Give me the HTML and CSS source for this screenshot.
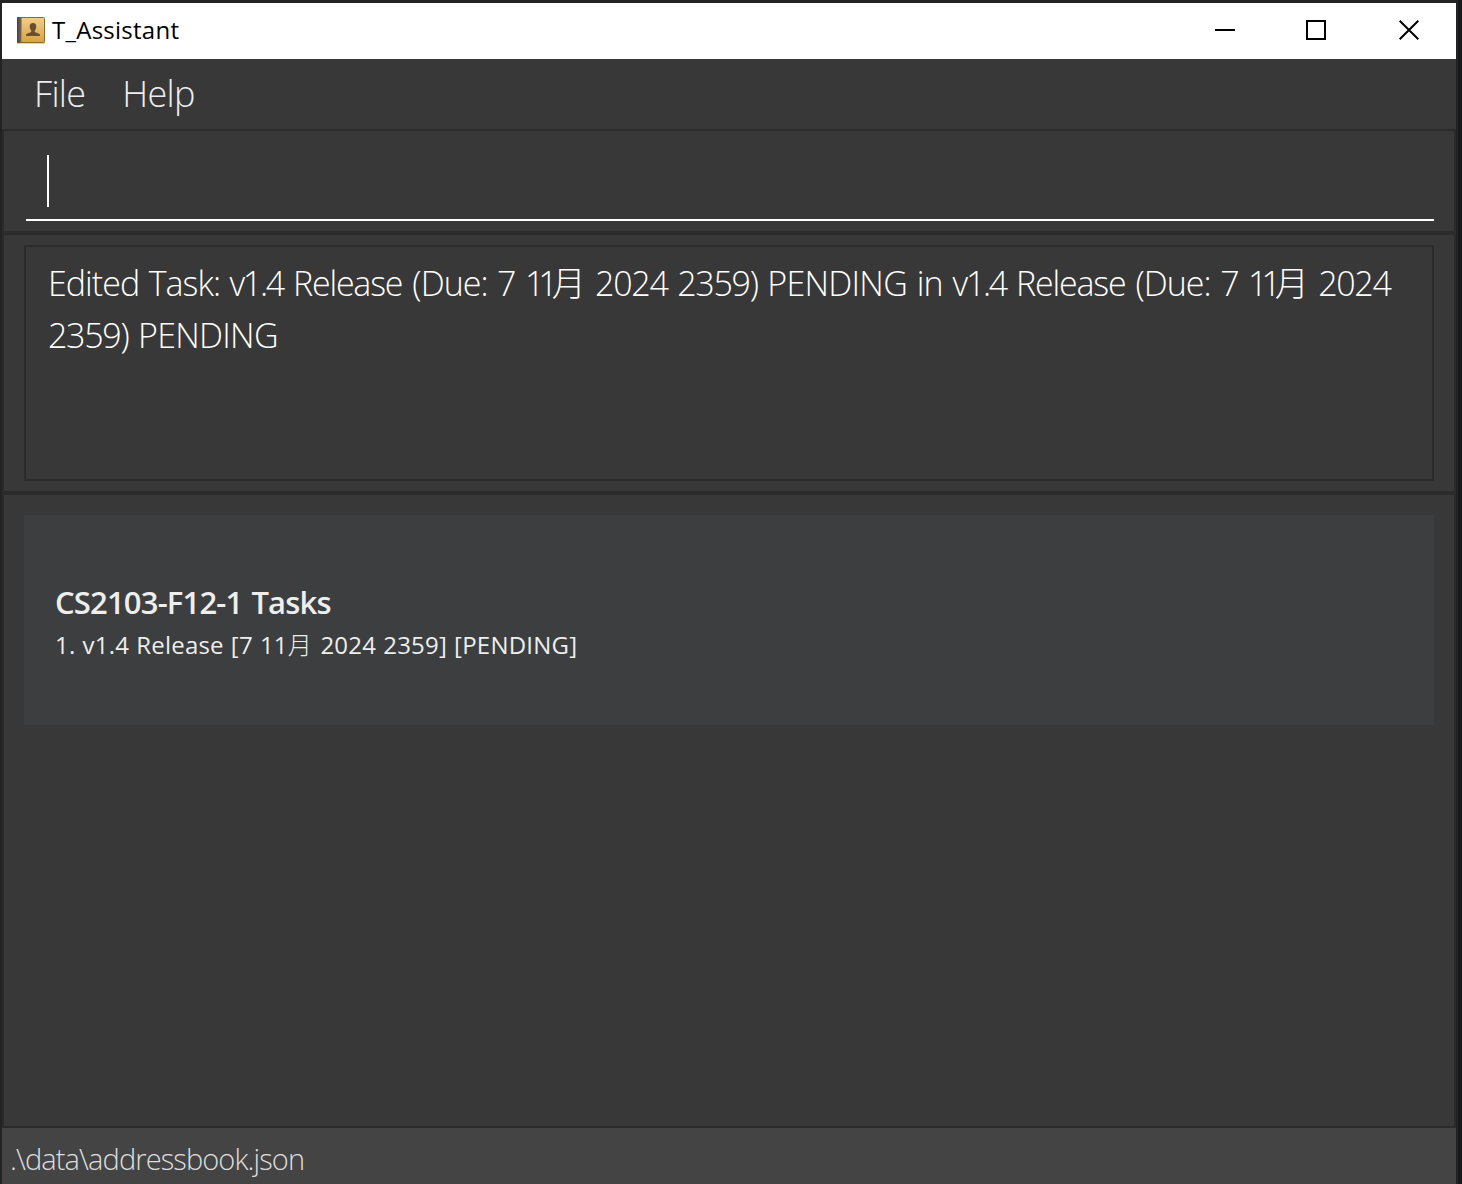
FILE: index.html
```
<!DOCTYPE html>
<html lang="en">
<head>
<meta charset="utf-8">
<title>T_Assistant</title>
<link rel="stylesheet" href="styles.css">
</head>
<body>
<div class="window">
  <header class="titlebar">
    <svg class="app-icon" width="30" height="30" viewBox="0 0 30 30">
      <defs>
        <linearGradient id="cover" x1="0" y1="0" x2="0" y2="1"><stop offset="0" stop-color="#edcf92"/><stop offset="1" stop-color="#d9a341"/></linearGradient>
        <linearGradient id="spine" x1="0" y1="0" x2="1" y2="0"><stop offset="0" stop-color="#4b3f3c"/><stop offset="1" stop-color="#75655f"/></linearGradient>
      </defs>
      <rect x="1" y="27" width="28" height="2" fill="#d4d4d4"/>
      <rect x="1.500" y="2.500" width="27" height="25" rx="1" fill="url(#cover)" stroke="#96691f"/>
      <rect x="1" y="2" width="4" height="26" rx="1" fill="url(#spine)"/>
      <path d="M5.500 3V27" stroke="#b88b45"/>
      <path d="M17 8c2.300 0 3.500 1.500 3.300 3.800-.1 1.700-.8 2.900-1.500 3.700v1.600l4.200 1.600c.8.400 1 1 1 2.300H10c0-1.300.2-1.900 1-2.300l4.200-1.600v-1.600c-.7-.8-1.400-2-1.500-3.700C13.500 9.500 14.700 8 17 8Z" fill="#66502f"/>
    </svg>
    <h1 class="title">T_Assistant</h1>
    <div class="controls">
      <svg width="20" height="20" viewBox="0 0 20 20"><path d="M0 10H20"/></svg>
      <svg width="20" height="20" viewBox="0 0 20 20"><rect x="1" y="1" width="18" height="18"/></svg>
      <svg width="20" height="20" viewBox="0 0 20 20"><path d="M.7.7 19.300 19.300M19.300.7.7 19.300"/></svg>
    </div>
  </header>
  <nav class="menu"><span>File</span><span>Help</span></nav>
  <main class="panes">
    <section class="pane command"><div class="field"><i class="caret"></i></div></section>
    <section class="pane result">
      <div class="output">
        <p>Edited Task: <span class="version">v1.4 </span><span class="word">Release </span>(Due: 7 <span class="ones">11</span><span class="month">月 </span><span class="number">2024 2359) </span><span class="caps">PENDING in </span><span class="version">v1.4 </span><span class="word">Release </span>(Due: 7 <span class="ones">11</span><span class="month">月 </span><span class="number">2024</span></p>
        <p><span class="number">2359) </span><span class="caps">PENDING</span></p>
      </div>
    </section>
    <section class="pane list">
      <article class="card"><h2>CS2103-F12-1 Tasks</h2><p>1. v1.4 Release [7 11<span class="month">月</span> 2024 2359] [PENDING]</p></article>
    </section>
  </main>
  <footer class="status">.\data\addressbook.json</footer>
</div>
</body>
</html>
```
FILE: styles.css
```
* { box-sizing: border-box; }
body { margin: 0; width: 1462px; height: 1184px; overflow: hidden; background: linear-gradient(90deg, #232323 1458px, #17191d 1458px); font-family: "Open Sans", "Noto Sans CJK SC", sans-serif; color: #fff; }
h1, h2, p { margin: 0; font-weight: 400; white-space: nowrap; }
.window { width: 1454px; height: 1181px; margin: 3px 0 0 2px; display: flex; flex-direction: column; background: #383838; }
.titlebar { height: 56px; display: flex; align-items: center; background: #fff; color: #000; padding: 0 37px 2px 14px; }
.title { margin-left: 6px; font-size: 24px; line-height: 36px; letter-spacing: 0.25px; }
.controls { margin-left: auto; display: flex; gap: 73px; }
.controls svg { fill: none; stroke: #000; stroke-width: 2; }
.controls svg:first-child { margin-right: -2px; }
.menu { height: 70px; display: flex; align-items: center; gap: 37px; padding: 0 0 1px 32px; font-size: 36px; font-weight: 300; letter-spacing: -0.7px; color: #eee; }
.panes { flex: 1; display: grid; grid-template-columns: minmax(0, 1fr); grid-template-rows: 100px 256px 1fr; gap: 4px; padding: 2px; background: #2b2b2b; }
.pane { background: #383838; }
.command { padding: 22px 20px 10px 22px; }
.field { height: 68px; border-bottom: 2px solid #fff; padding: 2px 0 0 21px; }
.caret { display: block; width: 2px; height: 52px; background: #fff; }
.result { padding: 10px 20px; }
.output { height: 236px; border: 2px solid #2b2b2b; padding: 10px 22px; font-size: 34px; line-height: 52px; letter-spacing: -0.95px; word-spacing: 1.5px; }
.output p { font-weight: 300; }
.version { letter-spacing: -2.3px; word-spacing: 3.5px; }
.word { letter-spacing: -1.2px; word-spacing: 2.4px; }
.ones { letter-spacing: -6px; }
.output .month { letter-spacing: -0.5px; }
.month { font-weight: 300; }
.number { letter-spacing: -1.3px; word-spacing: 2.2px; }
.caps { letter-spacing: -0.75px; word-spacing: 1.6px; }
.list { padding: 20px; }
.card { height: 210px; background: #3c3e3f; padding: 65px 31px; color: #eee; }
.card h2 { font-size: 31px; line-height: 45px; font-weight: 600; letter-spacing: -0.82px; word-spacing: 1.8px; }
.card p { font-size: 24px; line-height: 40px; letter-spacing: 0.22px; word-spacing: 0.6px; }
.card .month { letter-spacing: 1.5px; }
.status { height: 56px; padding-left: 8px; background: #444; color: #ddd; font-size: 29px; line-height: 61px; font-weight: 300; letter-spacing: -0.9px; }
```
